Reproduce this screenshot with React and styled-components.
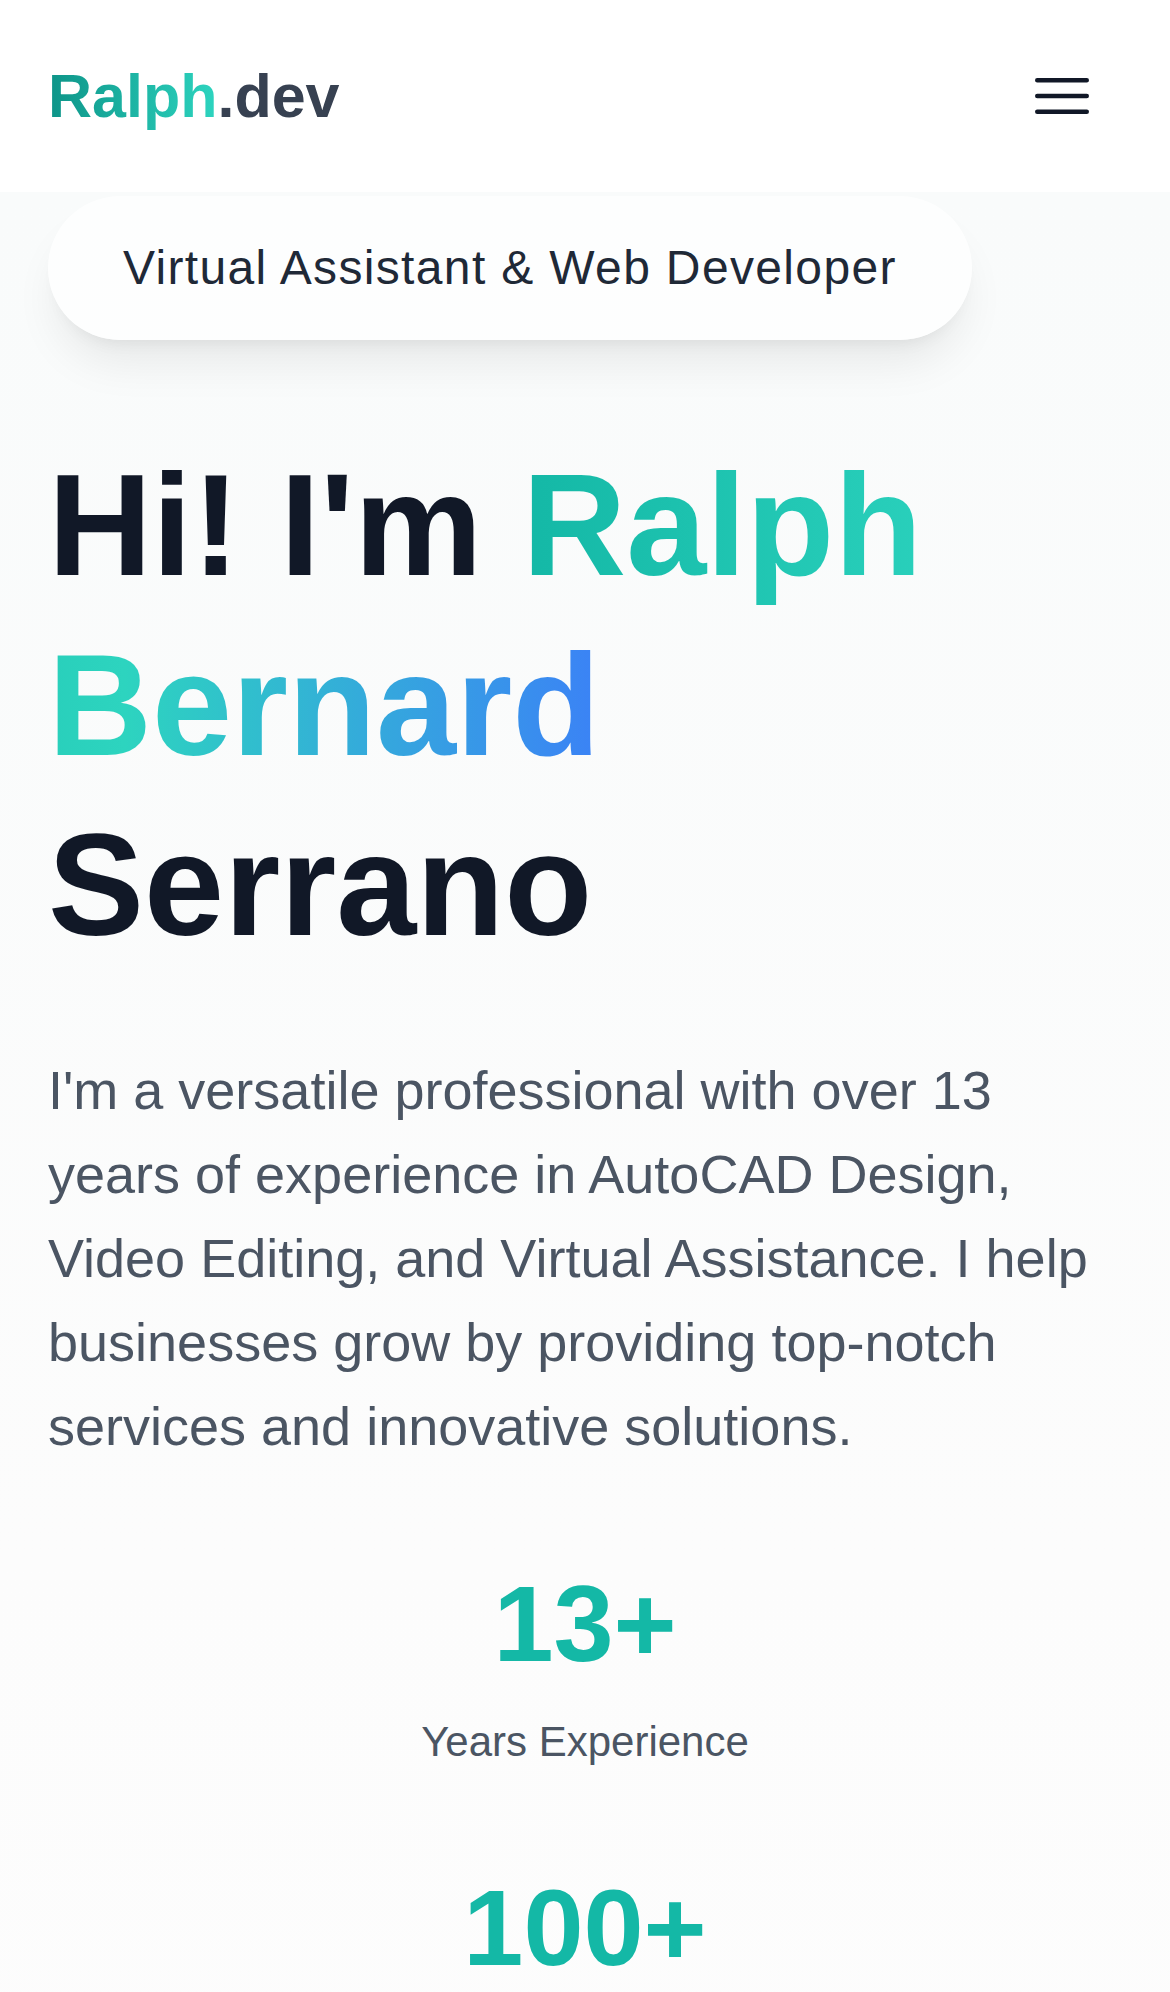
import React from 'react';
import styled, { createGlobalStyle } from 'styled-components';

const GlobalStyle = createGlobalStyle`
  * { box-sizing: border-box; }
  body {
    margin: 0;
    font-family: "Liberation Sans", Arial, sans-serif;
    background: #ffffff;
  }
`;

// Header
const Header = styled.header`
  height: 192px;
  padding: 0 48px;
  display: flex;
  align-items: center;
  justify-content: space-between;
  background: #ffffff;
`;

const Logo = styled.a`
  font-size: 61px;
  line-height: 84px;
  font-weight: 700;
  color: #374151;
  text-decoration: none;
`;

const GradientText = styled.span`
  background: linear-gradient(to right, ${(p) => p.$from}, ${(p) => p.$via ? `${p.$via}, ` : ''}${(p) => p.$to});
  -webkit-background-clip: text;
  background-clip: text;
  color: transparent;
`;

const MenuButton = styled.button`
  background: none;
  border: none;
  padding: 24px;
  cursor: pointer;
  color: #111827;
  display: flex;

  svg {
    width: 72px;
    height: 72px;
  }
`;

// Hero
const Hero = styled.section`
  padding: 4px 48px 96px;
  background: linear-gradient(180deg, #f9fbfb 0%, #fcfcfc 60%, #fdfdfd 100%);
`;

const Badge = styled.div`
  display: inline-block;
  padding: 36px 75px;
  margin-bottom: 96px;
  border-radius: 9999px;
  background: rgba(255, 255, 255, 0.7);
  box-shadow: 0 30px 45px -9px rgba(0, 0, 0, 0.08), 0 12px 18px -12px rgba(0, 0, 0, 0.08);
  font-size: 48px;
  line-height: 72px;
  letter-spacing: 1.35px;
  color: #1f2937;
`;

const Title = styled.h1`
  margin: 0 0 72px;
  font-size: 144px;
  line-height: 180px;
  font-weight: 700;
  color: #111827;
`;

const Intro = styled.p`
  margin: 0 0 96px;
  font-size: 54px;
  line-height: 84px;
  color: #4b5563;
`;

const Stats = styled.div`
  display: grid;
  grid-template-columns: 1fr;
  gap: 96px;
`;

const Stat = styled.div`
  text-align: center;
`;

const StatValue = styled.div`
  font-size: 108px;
  line-height: 120px;
  font-weight: 700;
  color: #14b8a6;
`;

const StatLabel = styled.div`
  margin-top: 28px;
  font-size: 42px;
  line-height: 60px;
  color: #4b5563;
`;

const stats = [
  { value: '13+', label: 'Years Experience' },
  { value: '100+', label: 'Projects Completed' },
  { value: '50+', label: 'Happy Clients' },
];

const App = () => {
  return (
    <>
      <GlobalStyle />
      <Header>
        <Logo href="#">
          <GradientText $from="#0d9488" $to="#2dd4bf">Ralph</GradientText>.dev
        </Logo>
        <MenuButton aria-label="Open menu">
          <svg xmlns="http://www.w3.org/2000/svg" fill="none" viewBox="0 0 24 24" stroke="currentColor" strokeWidth="1.5">
            <path strokeLinecap="round" strokeLinejoin="round" d="M3.75 6.75h16.5M3.75 12h16.5M3.75 17.25h16.5" />
          </svg>
        </MenuButton>
      </Header>

      <Hero>
        <Badge>Virtual Assistant &amp; Web Developer</Badge>
        <Title>
          Hi! I'm <GradientText $from="#14b8a6" $via="#2dd4bf" $to="#3b82f6">Ralph Bernard</GradientText> Serrano
        </Title>
        <Intro>
          I'm a versatile professional with over 13 years of experience in AutoCAD Design, Video Editing, and
          Virtual Assistance. I help businesses grow by providing top-notch services and innovative solutions.
        </Intro>
        <Stats>
          {stats.map((s) => (
            <Stat key={s.value}>
              <StatValue>{s.value}</StatValue>
              <StatLabel>{s.label}</StatLabel>
            </Stat>
          ))}
        </Stats>
      </Hero>
    </>
  );
};

export default App;
